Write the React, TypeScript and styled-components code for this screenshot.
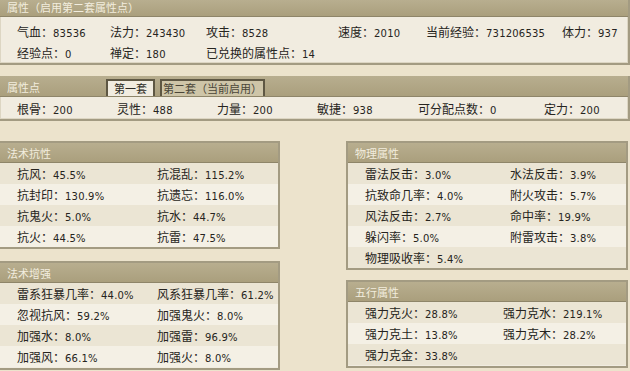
import React from 'react';
import styled, { createGlobalStyle } from 'styled-components';

const GlobalStyle = createGlobalStyle`
  body {
    margin: 0;
    background: #ece3cc;
    font-family: "Noto Sans CJK SC", "Liberation Sans", sans-serif;
    color: #262420;
  }
`;

type Stat = { label: string; value: string };

const topRows: Stat[][] = [
  [
    { label: '气血', value: '83536' },
    { label: '法力', value: '243430' },
    { label: '攻击', value: '8528' },
    { label: '速度', value: '2010' },
    { label: '当前经验', value: '731206535' },
    { label: '体力', value: '937' },
  ],
  [
    { label: '经验点', value: '0' },
    { label: '禅定', value: '180' },
    { label: '已兑换的属性点', value: '14' },
  ],
];

const pointRow: Stat[] = [
  { label: '根骨', value: '200' },
  { label: '灵性', value: '488' },
  { label: '力量', value: '200' },
  { label: '敏捷', value: '938' },
  { label: '可分配点数', value: '0' },
  { label: '定力', value: '200' },
];

const resist: Stat[][] = [
  [{ label: '抗风', value: '45.5%' }, { label: '抗混乱', value: '115.2%' }],
  [{ label: '抗封印', value: '130.9%' }, { label: '抗遗忘', value: '116.0%' }],
  [{ label: '抗鬼火', value: '5.0%' }, { label: '抗水', value: '44.7%' }],
  [{ label: '抗火', value: '44.5%' }, { label: '抗雷', value: '47.5%' }],
];

const boost: Stat[][] = [
  [{ label: '雷系狂暴几率', value: '44.0%' }, { label: '风系狂暴几率', value: '61.2%' }],
  [{ label: '忽视抗风', value: '59.2%' }, { label: '加强鬼火', value: '8.0%' }],
  [{ label: '加强水', value: '8.0%' }, { label: '加强雷', value: '96.9%' }],
  [{ label: '加强风', value: '66.1%' }, { label: '加强火', value: '8.0%' }],
];

const physical: Stat[][] = [
  [{ label: '雷法反击', value: '3.0%' }, { label: '水法反击', value: '3.9%' }],
  [{ label: '抗致命几率', value: '4.0%' }, { label: '附火攻击', value: '5.7%' }],
  [{ label: '风法反击', value: '2.7%' }, { label: '命中率', value: '19.9%' }],
  [{ label: '躲闪率', value: '5.0%' }, { label: '附雷攻击', value: '3.8%' }],
  [{ label: '物理吸收率', value: '5.4%' }],
];

const elements: Stat[][] = [
  [{ label: '强力克火', value: '28.8%' }, { label: '强力克水', value: '219.1%' }],
  [{ label: '强力克土', value: '13.8%' }, { label: '强力克木', value: '28.2%' }],
  [{ label: '强力克金', value: '33.8%' }],
];

const Page = styled.div`
  width: 630px;
  height: 371px;
  overflow: hidden;
`;

const Panel = styled.section<{ $gap?: number }>`
  margin-left: -2px;
  margin-top: ${p => p.$gap ?? 0}px;
  border: 2px solid #a39b82;
  border-top: none;
  background: #f1ece0;
  box-shadow: inset 0 0 0 1px #ddd6c3;
`;

const Header = styled.div<{ $h: number }>`
  height: ${p => p.$h}px;
  display: flex;
  align-items: flex-end;
  background: linear-gradient(#b8ae8f, #aa9f7d);
  border-bottom: 1px solid #8e8569;
  box-sizing: border-box;
`;

const HeaderTitle = styled.span<{ $w?: number }>`
  color: #f2edde;
  font-size: 11px;
  line-height: 15px;
  padding: 0 0 1px 7px;
  width: ${p => (p.$w ? `${p.$w}px` : 'auto')};
  flex-shrink: 0;
  white-space: nowrap;
`;

const Tab = styled.div<{ $active?: boolean }>`
  height: 17px;
  box-sizing: border-box;
  margin-right: 5px;
  padding: 0 ${p => (p.$active ? 6 : 1)}px;
  border: 2px solid #5e5743;
  border-bottom: none;
  background: ${p => (p.$active ? '#f1ece0' : '#cec5a8')};
  color: ${p => (p.$active ? '#2c2a24' : '#4a4538')};
  font-size: 11px;
  line-height: 15px;
  white-space: nowrap;
`;

const Body = styled.div<{ $pad: number }>`
  padding-top: ${p => p.$pad}px;
`;

const GridRow = styled.div<{ $cols: string; $h: number }>`
  display: grid;
  grid-template-columns: ${p => p.$cols};
  height: ${p => p.$h}px;
  align-items: center;
  padding-left: 17px;
`;

const StripeRow = styled(GridRow)`
  &:nth-child(odd) {
    background: #f4f0e5;
  }
  &:nth-child(even) {
    background: #ebe5d4;
  }
`;

const Cell = styled.span`
  font-size: 12px;
  white-space: nowrap;
`;

const Value = styled.span`
  font-family: "DejaVu Sans", "Liberation Sans", sans-serif;
  font-size: 10px;
  letter-spacing: 0.2px;
`;

const Lower = styled.div`
  display: flex;
  justify-content: space-between;
  margin-top: 20px;
  width: 630px;
  margin-left: -2px;
`;

const Column = styled.div`
  width: 282px;
  display: flex;
  flex-direction: column;
`;

const SubPanel = styled.section<{ $gap?: number }>`
  margin-top: ${p => p.$gap ?? 0}px;
  border: 2px solid #a39b82;
  background: #f1ece0;
  padding-bottom: ${p => (p.$gap === undefined ? 0 : 1)}px;
`;

const StatCell = ({ s }: { s: Stat }) => (
  <Cell>
    {s.label}：<Value>{s.value}</Value>
  </Cell>
);

const Group = ({
  title,
  rows,
  cols,
  gap,
}: {
  title: string;
  rows: Stat[][];
  cols: string;
  gap?: number;
}) => (
  <SubPanel $gap={gap}>
    <Header $h={20}>
      <HeaderTitle>{title}</HeaderTitle>
    </Header>
    {rows.map((r, i) => (
      <StripeRow key={i} $cols={cols} $h={21}>
        {r.map(s => (
          <StatCell key={s.label} s={s} />
        ))}
      </StripeRow>
    ))}
  </SubPanel>
);

export default function App() {
  return (
    <Page>
      <GlobalStyle />
      <Panel>
        <Header $h={17}>
          <HeaderTitle>属性（启用第二套属性点）</HeaderTitle>
        </Header>
        <Body $pad={4}>
          {topRows.map((r, i) => (
            <GridRow key={i} $cols="93px 96px 132px 88px 136px 1fr" $h={21}>
              {r.map(s => (
                <StatCell key={s.label} s={s} />
              ))}
            </GridRow>
          ))}
        </Body>
      </Panel>

      <Panel $gap={11}>
        <Header $h={21}>
          <HeaderTitle $w={99}>属性点</HeaderTitle>
          <Tab $active>第一套</Tab>
          <Tab>第二套（当前启用）</Tab>
        </Header>
        <Body $pad={0}>
          <GridRow $cols="100px 100px 100px 101px 126px 1fr" $h={22}>
            {pointRow.map(s => (
              <StatCell key={s.label} s={s} />
            ))}
          </GridRow>
        </Body>
      </Panel>

      <Lower>
        <Column>
          <Group title="法术抗性" rows={resist} cols="140px 1fr" />
          <Group title="法术增强" rows={boost} cols="140px 1fr" gap={12} />
        </Column>
        <Column>
          <Group title="物理属性" rows={physical} cols="145px 1fr" />
          <Group title="五行属性" rows={elements} cols="138px 1fr" gap={10} />
        </Column>
      </Lower>
    </Page>
  );
}
